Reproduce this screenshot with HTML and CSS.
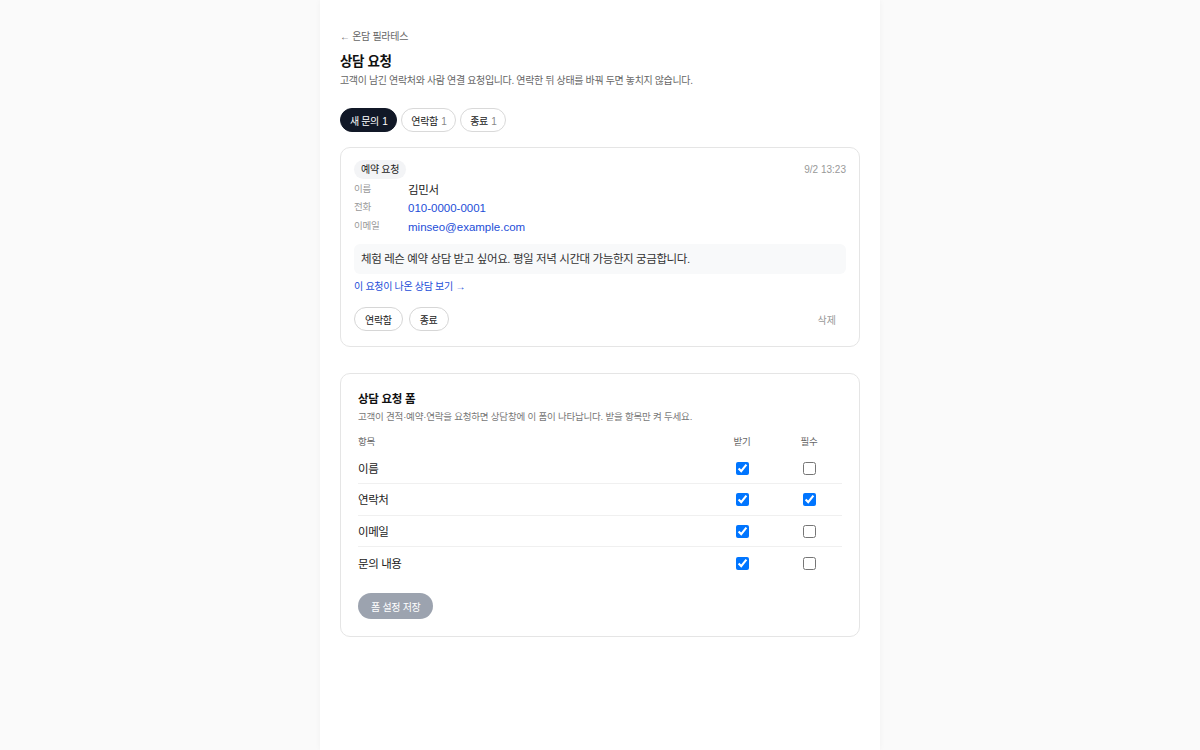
FILE: index.html
```html
<!DOCTYPE html>
<html lang="ko">
<head>
<meta charset="utf-8">
<link rel="stylesheet" href="styles.css">
</head>
<body>
<main class="page">
  <a class="back" href="#">← 온담 필라테스</a>
  <h1 class="title">상담 요청</h1>
  <p class="subtitle">고객이 남긴 연락처와 사람 연결 요청입니다. 연락한 뒤 상태를 바꿔 두면 놓치지 않습니다.</p>

  <div class="tabs">
    <button class="tab active">새 문의 <span class="cnt">1</span></button>
    <button class="tab">연락함 <span class="cnt">1</span></button>
    <button class="tab">종료 <span class="cnt">1</span></button>
  </div>

  <section class="card req">
    <div class="req-head">
      <span class="tag">예약 요청</span>
      <span class="time">9/2 13:23</span>
    </div>
    <div class="fields">
      <div class="field"><span class="lbl">이름</span><span class="val">김민서</span></div>
      <div class="field"><span class="lbl">전화</span><a class="val link" href="#">010-0000-0001</a></div>
      <div class="field"><span class="lbl">이메일</span><a class="val link" href="#">minseo@example.com</a></div>
    </div>
    <div class="msg">체험 레슨 예약 상담 받고 싶어요. 평일 저녁 시간대 가능한지 궁금합니다.</div>
    <a class="conv" href="#">이 요청이 나온 상담 보기 →</a>
    <div class="actions">
      <button class="btn">연락함</button>
      <button class="btn">종료</button>
      <button class="del">삭제</button>
    </div>
  </section>

  <section class="card form">
    <h2 class="form-title">상담 요청 폼</h2>
    <p class="form-desc">고객이 견적·예약·연락을 요청하면 상담창에 이 폼이 나타납니다. 받을 항목만 켜 두세요.</p>
    <div class="grid">
      <div class="row head"><span>항목</span><span class="c">받기</span><span class="c">필수</span></div>
      <div class="row"><span class="name">이름</span><span class="c"><input type="checkbox" checked></span><span class="c"><input type="checkbox"></span></div>
      <div class="row"><span class="name">연락처</span><span class="c"><input type="checkbox" checked></span><span class="c"><input type="checkbox" checked></span></div>
      <div class="row"><span class="name">이메일</span><span class="c"><input type="checkbox" checked></span><span class="c"><input type="checkbox"></span></div>
      <div class="row last"><span class="name">문의 내용</span><span class="c"><input type="checkbox" checked></span><span class="c"><input type="checkbox"></span></div>
    </div>
    <button class="save">폼 설정 저장</button>
  </section>
</main>
</body>
</html>
```

FILE: styles.css
```css
* { box-sizing: border-box; }
html, body { margin: 0; padding: 0; }
body {
  background: #fafafa;
  font-family: "Liberation Sans", "Noto Sans CJK KR", sans-serif;
  color: #111;
  min-height: 750px;
}
.page {
  width: 560px;
  margin: 0 auto;
  background: #fff;
  min-height: 750px;
  padding: 30px 20px 40px;
  box-shadow: 0 0 6px rgba(0,0,0,0.04);
}
.back {
  display: block;
  font-size: 10px;
  letter-spacing: -0.3px;
  color: #666;
  text-decoration: none;
  line-height: 14px;
}
.title {
  margin: 9px 0 0;
  font-size: 13.5px;
  letter-spacing: -0.4px;
  font-weight: 700;
  line-height: 18px;
}
.subtitle {
  margin: 3px 0 0;
  font-size: 10px;
  letter-spacing: -0.35px;
  color: #666;
  line-height: 14px;
}
.tabs {
  display: flex;
  gap: 4px;
  margin-top: 20px;
}
.tab {
  height: 24px;
  padding: 0 9px;
  border: 1px solid #d9d9d9;
  background: #fff;
  border-radius: 12px;
  font-family: inherit;
  font-size: 10px;
  letter-spacing: -0.4px;
  color: #222;
  cursor: pointer;
}
.tab .cnt { color: #888; margin-left: 1px; }
.tab.active { background: #111827; border-color: #111827; color: #fff; }
.tab.active .cnt { color: #fff; }

.card {
  border: 1px solid #e5e5e5;
  border-radius: 10px;
  background: #fff;
}
.req {
  margin-top: 15px;
  padding: 12px 13px 15px;
}
.req-head {
  display: flex;
  justify-content: space-between;
  align-items: center;
}
.tag {
  background: #f3f4f6;
  border-radius: 10px;
  padding: 0 7px;
  height: 19px;
  line-height: 19px;
  font-size: 10px;
  letter-spacing: -0.3px;
  color: #222;
}
.time { font-size: 10px; color: #999; }
.fields { margin-top: 2px; }
.field {
  display: flex;
  align-items: baseline;
  height: 19.5px;
}
.lbl {
  width: 54px;
  font-size: 9.5px;
  letter-spacing: -0.2px;
  color: #999;
  position: relative;
  top: -2px;
}
.val { font-size: 11.5px; color: #222; }
.field:first-child .val { letter-spacing: -0.3px; }
.link { color: #1d4ed8; text-decoration: none; }
.msg {
  margin-top: 4.5px;
  background: #f8f9fa;
  border-radius: 6px;
  padding: 7px 7px;
  font-size: 11.5px;
  letter-spacing: -0.4px;
  line-height: 16px;
  color: #333;
}
.conv {
  display: block;
  margin-top: 6px;
  font-size: 10px;
  letter-spacing: -0.3px;
  color: #1d4ed8;
  text-decoration: none;
  line-height: 14px;
}
.actions {
  display: flex;
  gap: 6px;
  align-items: center;
  margin-top: 13px;
}
.btn {
  height: 24px;
  padding: 0 10px;
  border: 1px solid #d6d6d6;
  border-radius: 12px;
  background: #fff;
  font-family: inherit;
  font-size: 10px;
  letter-spacing: -0.3px;
  color: #222;
}
.del {
  margin-left: auto;
  border: 0;
  background: none;
  font-family: inherit;
  font-size: 10px;
  color: #999;
  padding: 0 10px;
}

.form {
  margin-top: 26px;
  padding: 17px 17px 17px;
}
.form-title {
  margin: 0;
  font-size: 11.5px;
  letter-spacing: -0.3px;
  font-weight: 700;
  line-height: 16px;
}
.form-desc {
  margin: 3px 0 0;
  font-size: 9.5px;
  letter-spacing: -0.2px;
  color: #777;
  line-height: 14px;
}
.grid { margin-top: 10px; }
.row {
  display: grid;
  grid-template-columns: 1fr 68px 66px;
  align-items: center;
  height: 31.7px;
  border-bottom: 1px solid #f0f0f0;
  font-size: 11.5px;
  letter-spacing: -0.4px;
  color: #222;
}
.row.head {
  height: 19px;
  border-bottom: 0;
  font-size: 9.5px;
  letter-spacing: -0.2px;
  color: #666;
  align-items: start;
}
.row.head + .row { height: 31px; }
.row.last { border-bottom: 0; }
.row .c { display: flex; justify-content: center; }
.row input { margin: 0; width: 13px; height: 13px; }
.save {
  margin-top: 14px;
  height: 26px;
  padding: 0 13px;
  border: 0;
  border-radius: 13px;
  background: #9ca3af;
  color: #fff;
  font-family: inherit;
  font-size: 10px;
  letter-spacing: -0.3px;
}
```
